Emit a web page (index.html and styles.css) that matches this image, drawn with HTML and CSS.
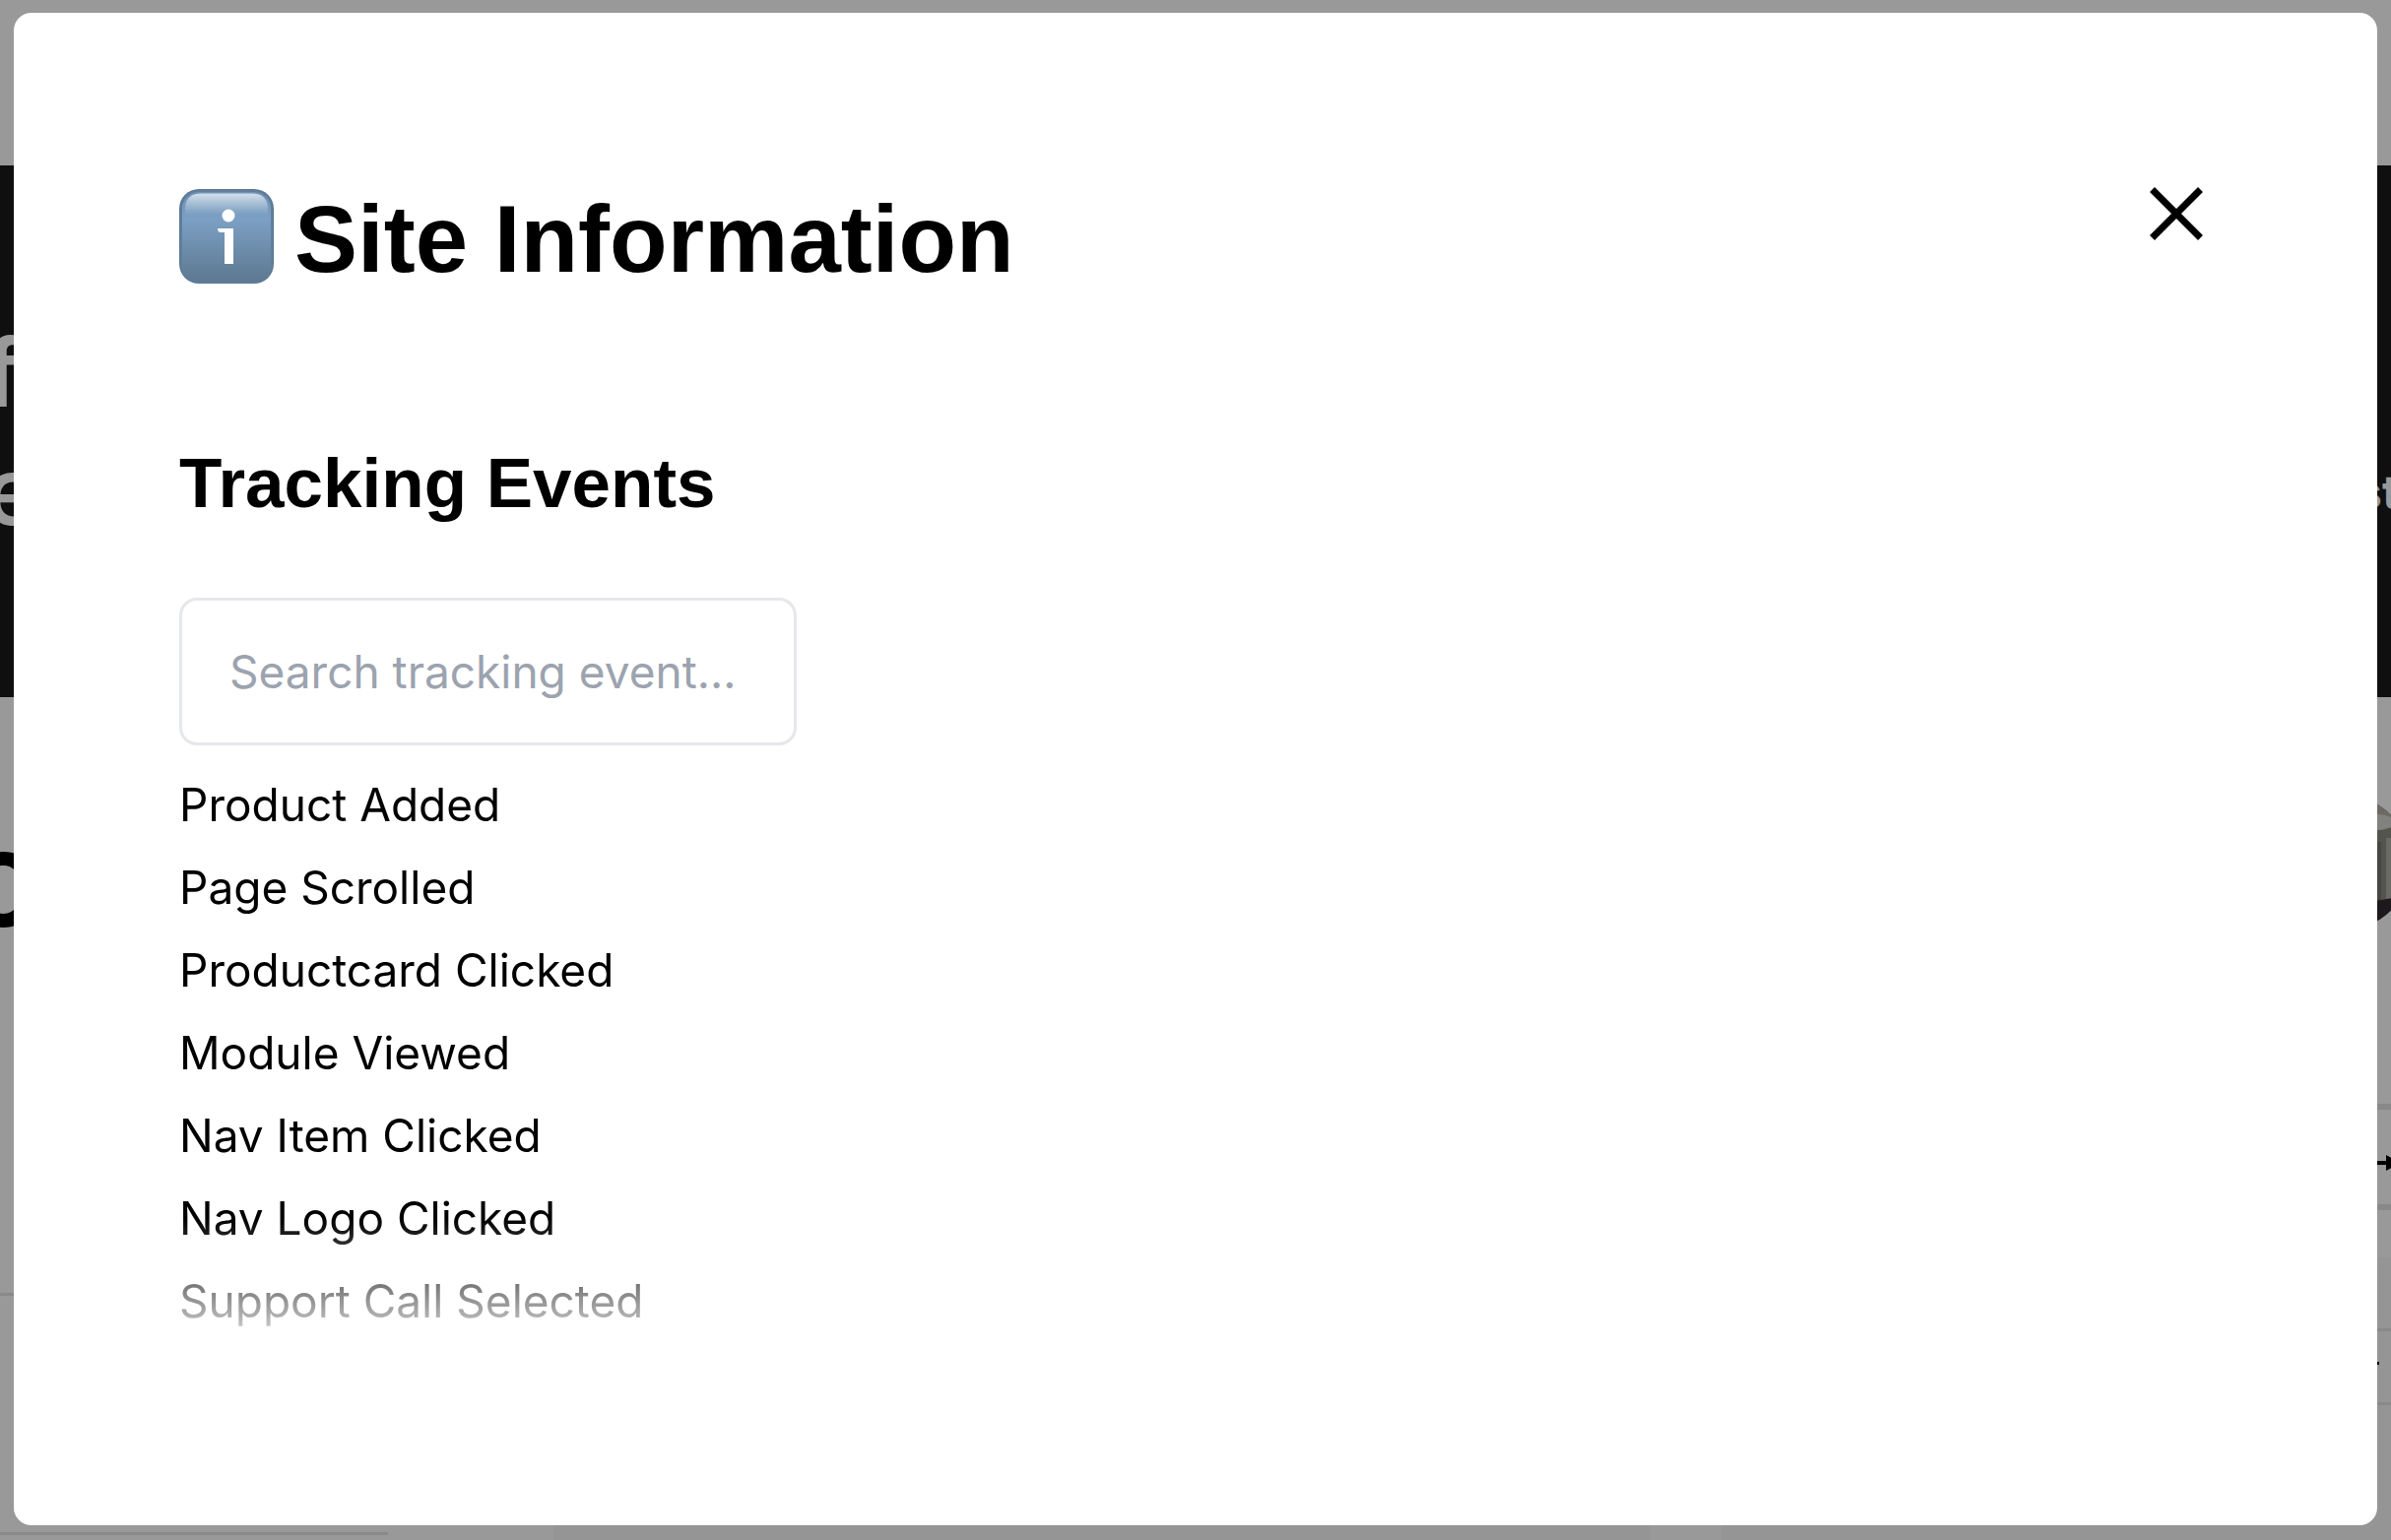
FILE: index.html
```html
<!DOCTYPE html>
<html lang="en">
<head>
<meta charset="utf-8">
<title>Site Information</title>
<link rel="stylesheet" href="styles.css">
</head>
<body>
<div class="page" aria-hidden="true">
  <div class="topbar"></div>
  <div class="hero">
    <div class="hero-title"><div>f</div><div>e</div></div>
    <div class="hero-note">st</div>
  </div>
  <div class="content">
    <div class="col-left">
      <div class="display">o</div>
      <div class="rule"></div>
      <div class="rule rule-short"></div>
    </div>
    <div class="panel panel-main"></div>
    <div></div>
    <div class="col-right">
      <svg class="avatar" viewBox="0 0 138 138">
        <defs><clipPath id="round"><circle cx="69" cy="69" r="69"/></clipPath></defs>
        <g clip-path="url(#round)">
          <rect width="138" height="138" fill="#8d8c84"/>
          <rect x="0" y="0" width="138" height="34" fill="#b5b0a8"/>
          <ellipse cx="104" cy="28" rx="17" ry="8" fill="#d8d8d2"/>
          <rect x="100" y="48" width="8" height="62" fill="#75756f"/>
          <rect x="113" y="44" width="5" height="62" fill="#b0b0a8"/>
          <rect x="122" y="40" width="7" height="66" fill="#77776f"/>
          <path d="M90 110l48-8v36H90z" fill="#302930"/>
        </g>
      </svg>
      <div class="box box-arrow">
        <svg class="arrow" viewBox="0 0 30 16"><path d="M0 8h20" stroke="#000" stroke-width="4"/><path d="M15 0l15 8-15 8z"/></svg>
      </div>
      <div class="panel panel-side">
        <div class="box box-thin"><span class="dash"></span></div>
      </div>
    </div>
  </div>
</div>

<div class="overlay">
  <section class="modal" role="dialog" aria-modal="true" aria-labelledby="title">
    <header class="modal-head">
      <h1 id="title" class="title">
        <svg class="info" viewBox="0 0 96 96" aria-hidden="true">
          <defs>
            <linearGradient id="face" x1="0" y1="0" x2="0" y2="1">
              <stop offset="0" stop-color="#6f93b5"/>
              <stop offset=".3" stop-color="#7ca0c4"/>
              <stop offset="1" stop-color="#5d7890"/>
            </linearGradient>
            <linearGradient id="shine" x1="0" y1="0" x2="0" y2="1">
              <stop offset="0" stop-color="#d3e0ec"/>
              <stop offset="1" stop-color="#d3e0ec" stop-opacity="0"/>
            </linearGradient>
          </defs>
          <rect width="96" height="96" rx="20" fill="#587590"/>
          <rect x="1" y="1" width="94" height="94" rx="19" fill="#607f9c"/>
          <rect x="3" y="3" width="90" height="91" rx="17" fill="url(#face)"/>
          <path d="M6 26V21Q6 4.500 22 4.500H74Q90 4.500 90 21V26Z" fill="url(#shine)"/>
          <circle cx="50" cy="27" r="6.500" fill="#fff"/>
          <path d="M39 40H55V76H46V44H42Q39 44 39 40Z" fill="#fff"/>
        </svg>
        <span>Site Information</span>
      </h1>
      <button class="close" type="button" aria-label="Close">
        <svg viewBox="0 0 54 54"><path d="M2.500 2.500l49 49M51.500 2.500l-49 49" stroke="#000" stroke-width="7"/></svg>
      </button>
    </header>
    <h2 class="subtitle">Tracking Events</h2>
    <input class="search" type="search" aria-label="Search tracking events" placeholder="Search tracking event...">
    <ul class="events">
      <li>Product Added</li>
      <li>Page Scrolled</li>
      <li>Productcard Clicked</li>
      <li>Module Viewed</li>
      <li>Nav Item Clicked</li>
      <li>Nav Logo Clicked</li>
      <li>Support Call Selected</li>
    </ul>
  </section>
</div>
</body>
</html>
```
FILE: styles.css
```css
* { box-sizing: border-box; }

body {
  margin: 0;
  height: 100vh;
  overflow: hidden;
  background: #fff;
  color: #000;
  font-family: Inter, "Liberation Sans", sans-serif;
}

/* Page behind the dialog */
.page {
  height: 100vh;
  display: flex;
  flex-direction: column;
  overflow: hidden;
}
.topbar { flex: none; height: 168px; }
.hero {
  flex: none;
  height: 540px;
  display: flex;
  justify-content: space-between;
  background: #191919;
  color: #fff;
}
.hero-title {
  margin-left: -16px;
  padding-top: 150px;
  font: 600 96px/120px Inter, sans-serif;
}
.hero-note {
  width: 36px;
  padding-top: 302px;
  font: 700 48px/60px Inter, sans-serif;
}
.content {
  flex: 1;
  display: grid;
  grid-template-columns: 562px 1114fr 72px 680fr;
  min-height: 0;
}
.col-left { padding-top: 93px; }
.display {
  height: 512px;
  margin-left: -38px;
  font: 600 136px/180px Inter, sans-serif;
}
.rule { height: 3px; margin-bottom: 240px; background: #e5e5e5; }
.rule-short { width: 394px; }
.panel { background: #f8f8f8; }
.panel-main { margin-top: 569px; }
.col-right { display: flex; flex-direction: column; }
.avatar {
  flex: none;
  width: 138px;
  height: 138px;
  margin: 99px -20px 176px auto;
}
.box {
  display: flex;
  align-items: center;
  justify-content: flex-end;
  border: solid #e5e5e5;
}
.box-arrow {
  flex: none;
  height: 108px;
  padding-top: 12px;
  border-width: 6px 0;
  margin-bottom: 48px;
}
.arrow { width: 30px; height: 16px; margin-right: -10px; }
.panel-side { flex: 1; padding-top: 72px; }
.box-thin { height: 78px; border-width: 3px 0; }
.dash { width: 20px; height: 3px; margin: 0 12px 8px 0; background: #000; }

/* Dialog */
.overlay {
  position: fixed;
  inset: 0;
  display: flex;
  padding: 13px 14px 15px;
  background: rgba(0, 0, 0, .4);
}
.modal {
  flex: 1;
  padding: 168px;
  border-radius: 18px;
  background: #fff;
}
.modal-head {
  display: flex;
  justify-content: space-between;
  align-items: flex-start;
}
.title {
  display: flex;
  align-items: flex-start;
  gap: 21px;
  margin: 0;
  font: 700 96px/124px "Liberation Sans", sans-serif;
}
.info { width: 96px; height: 96px; margin-top: 11px; }
.close {
  width: 54px;
  height: 54px;
  margin: 9px 9px 0 0;
  padding: 0;
  border: 0;
  background: none;
}
.close svg { display: block; }
.subtitle {
  margin: 138px 0 68px;
  font: 700 71px/96px "Liberation Sans", sans-serif;
}
.search {
  display: block;
  width: 627px;
  height: 150px;
  padding: 0 24px 0 48px;
  border: 3px solid #e5e7eb;
  border-radius: 18px;
  background: #fff;
  font: 400 46px/72px Inter, sans-serif;
  appearance: none;
}
.search::placeholder { color: #9ca3af; opacity: 1; }
.events {
  margin: 18px 0 0;
  padding: 0 0 18px;
  list-style: none;
  font-size: 46px;
  line-height: 84px;
  -webkit-mask-image: linear-gradient(to top, transparent, #000 144px);
  mask-image: linear-gradient(to top, transparent, #000 144px);
}
```
